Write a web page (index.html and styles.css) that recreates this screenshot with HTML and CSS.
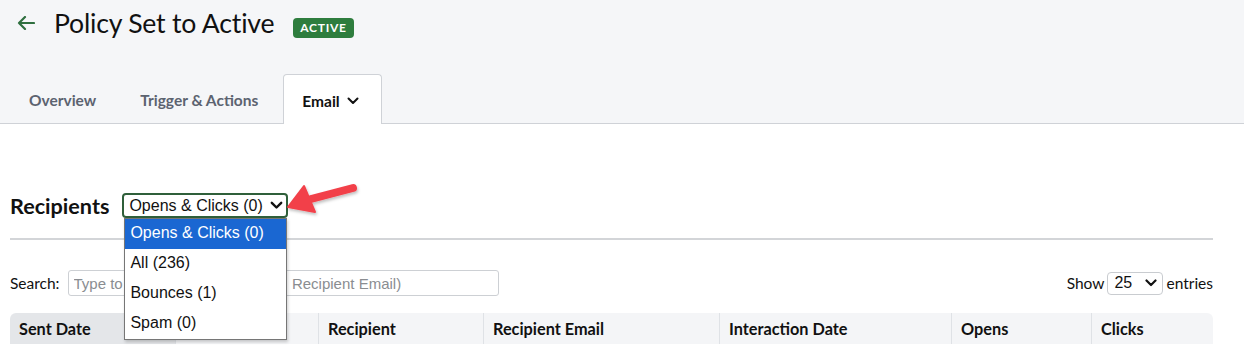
FILE: index.html
```html
<!DOCTYPE html>
<html lang="en">
<head>
<meta charset="utf-8">
<title>Policy Set to Active</title>
<link rel="stylesheet" href="styles.css">
</head>
<body>
<header class="page-head">
  <div class="title-row">
    <a class="back" href="#" aria-label="Back">
      <svg width="18" height="14" viewBox="0 0 18 14"><path d="M17 7H2M8 1L2 7l6 6" fill="none" stroke="#2f6f3f" stroke-width="2.2" stroke-linecap="round" stroke-linejoin="round"/></svg>
    </a>
    <h1 class="title">Policy Set to Active</h1>
    <span class="badge">ACTIVE</span>
  </div>
  <nav class="tabs">
    <a class="tab" href="#">Overview</a>
    <a class="tab" href="#">Trigger &amp; Actions</a>
    <a class="tab tab-active" href="#">Email
      <svg width="12" height="8" viewBox="0 0 12 8"><path d="M1.5 1.5L6 6l4.5-4.5" fill="none" stroke="#111" stroke-width="2" stroke-linecap="round" stroke-linejoin="round"/></svg>
    </a>
  </nav>
</header>

<main class="content">
  <div class="recipients-row">
    <h2 class="section-title">Recipients</h2>
    <div class="filter">
      <div class="filter-select">
        <span>Opens &amp; Clicks (0)</span>
        <svg width="13" height="9" viewBox="0 0 13 9"><path d="M1.8 1.8L6.5 6.5l4.7-4.7" fill="none" stroke="#111" stroke-width="2.4" stroke-linecap="round" stroke-linejoin="round"/></svg>
      </div>
      <ul class="filter-menu">
        <li class="selected">Opens &amp; Clicks (0)</li>
        <li>All (236)</li>
        <li>Bounces (1)</li>
        <li>Spam (0)</li>
      </ul>
      <svg class="pointer" width="80" height="40" viewBox="0 0 80 40">
        <defs>
          <filter id="sh" x="-20%" y="-30%" width="140%" height="160%">
            <feDropShadow dx="1" dy="2" stdDeviation="1.5" flood-color="#000" flood-opacity="0.25"/>
          </filter>
        </defs>
        <g filter="url(#sh)" fill="#f2414a">
          <path d="M66 6 L24 17" stroke="#f2414a" stroke-width="8" stroke-linecap="round"/>
          <path d="M1 25 L17 4 L28 30 Z" stroke="#f2414a" stroke-width="2" stroke-linejoin="round"/>
        </g>
      </svg>
    </div>
  </div>
  <hr class="divider">

  <div class="controls">
    <label class="search">Search: <input type="text" placeholder="Type to search (Date, Recipient, Recipient Email)"></label>
    <div class="length"><span>Show</span>
      <div class="len-select"><span>25</span>
        <svg width="12" height="8" viewBox="0 0 12 8"><path d="M1.5 1.5L6 6l4.5-4.5" fill="none" stroke="#111" stroke-width="2.2" stroke-linecap="round" stroke-linejoin="round"/></svg>
      </div>
      <span>entries</span></div>
  </div>

  <table class="grid">
    <thead>
      <tr>
        <th class="c1 sorted">Sent Date</th>
        <th class="c2"></th>
        <th class="c3">Recipient</th>
        <th class="c4">Recipient Email</th>
        <th class="c5">Interaction Date</th>
        <th class="c6">Opens</th>
        <th class="c7">Clicks</th>
      </tr>
    </thead>
  </table>
</main>
</body>
</html>
```

FILE: styles.css
```css
* { box-sizing: border-box; }
html, body { margin: 0; padding: 0; }
body {
  font-family: "Lato", "Open Sans", sans-serif;
  color: #111;
  background: #fff;
  width: 1244px;
  height: 346px;
  overflow: hidden;
}

.page-head {
  background: #f5f6f8;
  border-bottom: 1px solid #cfd2d7;
  height: 124px;
  display: flex;
  flex-direction: column;
}
.title-row {
  display: flex;
  align-items: center;
  height: 46px;
  padding-left: 17px;
}
.back { display: flex; align-items: center; margin-right: 19px; }
.title {
  margin: 0;
  font-size: 26.6px;
  font-weight: 400;
  color: #111;
  letter-spacing: -0.2px;
}
.badge {
  margin-left: 19px;
  margin-top: 9px;
  background: #2e7d3e;
  color: #fff;
  font-size: 12px;
  font-weight: 700;
  letter-spacing: 0.7px;
  border-radius: 4px;
  padding: 2px 7px;
  line-height: 16px;
}
.tabs {
  margin-top: auto;
  display: flex;
  gap: 6px;
  padding-left: 10px;
}
.tab {
  display: flex;
  align-items: center;
  gap: 7px;
  height: 49px;
  padding: 2px 18px 0;
  font-size: 15.5px;
  font-weight: 700;
  color: #5c6370;
  text-decoration: none;
  border: 1px solid transparent;
  border-bottom: none;
  border-radius: 4px 4px 0 0;
}
.tab-active {
  background: #fff;
  color: #111;
  border-color: #cfd2d7;
  height: 50px;
  margin-bottom: -1px;
  width: 99px;
}

.content { padding: 0 31px 0 10px; }
.recipients-row {
  display: flex;
  align-items: center;
  gap: 13px;
  margin-top: 69px;
  height: 25px;
}
.section-title { margin: 0; font-size: 21.6px; font-weight: 700; }
.filter { position: relative; }
.filter-select {
  display: flex;
  align-items: center;
  justify-content: space-between;
  width: 166px;
  height: 25px;
  border: 2px solid #2f5f3a;
  border-radius: 4px;
  background: #fff;
  padding: 0 3px 0 5px;
  font-family: "Liberation Sans", Arial, sans-serif;
  font-size: 16px;
  color: #111;
}
.filter-menu {
  position: absolute;
  left: 2px;
  top: 25px;
  width: 163px;
  margin: 0;
  padding: 0;
  list-style: none;
  background: #fff;
  border: 1px solid #767676;
  box-shadow: 1px 2px 3px rgba(0,0,0,0.2);
  font-family: "Liberation Sans", Arial, sans-serif;
  font-size: 16px;
  z-index: 5;
}
.filter-menu li {
  height: 30px;
  line-height: 28px;
  padding-left: 5px;
  color: #111;
}
.filter-menu li.selected { background: #1a67d2; color: #fff; }
.pointer { position: absolute; left: 165px; top: -11px; z-index: 6; }

.divider {
  border: none;
  border-top: 2px solid #d3d5d8;
  margin: 20px 0 0;
}

.controls {
  display: flex;
  align-items: center;
  justify-content: space-between;
  margin-top: 30px;
  height: 26px;
}
.search { font-size: 15.5px; display: flex; align-items: center; gap: 8px; }
.search input {
  width: 431px;
  height: 26px;
  border: 1px solid #cdd0d4;
  border-radius: 3px;
  padding: 0 5px;
  font-family: "Liberation Sans", Arial, sans-serif;
  font-size: 15px;
}
.search input::placeholder { color: #8a8d91; }
.length { display: flex; align-items: center; gap: 3px; font-size: 15.5px; }
.len-select {
  display: flex;
  align-items: center;
  justify-content: space-between;
  width: 56px;
  height: 23px;
  border: 1px solid #c9ccd0;
  border-radius: 4px;
  padding: 0 5px 0 6px;
  font-family: "Liberation Sans", Arial, sans-serif;
  font-size: 16px;
}

.grid {
  margin-top: 17px;
  width: 1203px;
  border-collapse: separate;
  border-spacing: 0;
  table-layout: fixed;
}
.grid th {
  background: #f4f5f7;
  height: 31px;
  padding: 0 9px;
  text-align: left;
  font-size: 16.3px;
  font-weight: 700;
  border-left: 1px solid #dfe2e6;
}
.grid th:first-child { border-left: none; border-top-left-radius: 6px; }
.grid th:last-child { border-top-right-radius: 6px; }
.grid th.sorted { background: #e4e6e9; }
.c1 { width: 165px; }
.c2 { width: 143px; }
.c3 { width: 165px; }
.c4 { width: 236px; }
.c5 { width: 232px; }
.c6 { width: 140px; }
.c7 { width: 122px; }
```
